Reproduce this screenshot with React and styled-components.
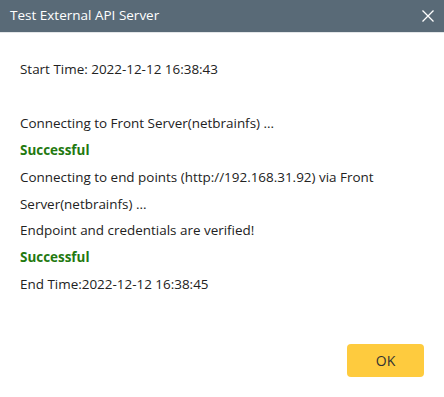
import React from "react";
import styled, { createGlobalStyle } from "styled-components";

const GlobalStyle = createGlobalStyle`
  html, body {
    margin: 0;
    padding: 0;
    background: #ffffff;
  }
  body {
    font-family: "Open Sans", "Liberation Sans", sans-serif;
  }
`;

const Dialog = styled.div`
  width: 444px;
  height: 397px;
  display: flex;
  flex-direction: column;
  background: #fff;
`;

const Header = styled.div`
  height: 32px;
  display: flex;
  align-items: center;
  justify-content: space-between;
  padding: 0 4px 0 10px;
  background-color: #596a77;
  border-bottom: 1px solid #e3e6e8;
  color: #fff;
`;

const Title = styled.div`
  font-size: 13.5px;
  line-height: 1;
`;

const CloseButton = styled.button`
  width: 24px;
  height: 24px;
  padding: 0;
  border: none;
  background: transparent;
  display: flex;
  align-items: center;
  justify-content: center;
  cursor: pointer;
`;

const Body = styled.div`
  flex: 1;
  padding: 23px 20px 0;
`;

const Line = styled.div`
  font-size: 13.45px;
  line-height: 26.9px;
  color: ${(p) => (p.$ok ? "#23790f" : "#222")};
  font-weight: ${(p) => (p.$ok ? 700 : 400)};
  min-height: 26.9px;
`;

const Footer = styled.div`
  display: flex;
  justify-content: flex-end;
  padding: 0 20px 20px;
`;

const OkButton = styled.button`
  width: 77px;
  height: 33px;
  border: none;
  border-radius: 4px;
  background-color: #fecb3e;
  color: #333;
  font-family: "Open Sans", "Liberation Sans", sans-serif;
  font-size: 14px;
  cursor: pointer;
`;

const lines = [
  { text: "Start Time: 2022-12-12 16:38:43" },
  { text: "" },
  { text: "Connecting to Front Server(netbrainfs) ..." },
  { text: "Successful", ok: true },
  { text: "Connecting to end points (http://192.168.31.92) via Front" },
  { text: "Server(netbrainfs) ..." },
  { text: "Endpoint and credentials are verified!" },
  { text: "Successful", ok: true },
  { text: "End Time:2022-12-12 16:38:45" },
];

export default function App() {
  return (
    <>
      <GlobalStyle />
      <Dialog>
        <Header>
          <Title>Test External API Server</Title>
          <CloseButton aria-label="close">
            <svg width="12" height="12" viewBox="0 0 12 12">
              <path d="M0.5 0.5L11.5 11.5M11.5 0.5L0.5 11.5" stroke="#fff" strokeWidth="1.3" />
            </svg>
          </CloseButton>
        </Header>
        <Body>
          {lines.map((l, i) => (
            <Line key={i} $ok={l.ok}>
              {l.text}
            </Line>
          ))}
        </Body>
        <Footer>
          <OkButton>OK</OkButton>
        </Footer>
      </Dialog>
    </>
  );
}
